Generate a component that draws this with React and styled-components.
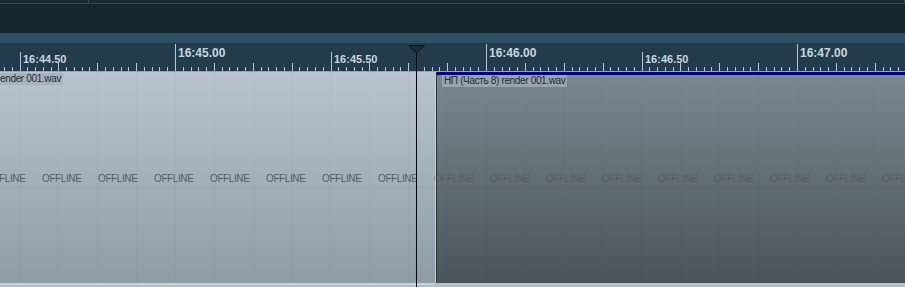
import styled, { createGlobalStyle } from 'styled-components'

const ORIGIN = 175
const PX_PER_SEC = 311
const TICK = PX_PER_SEC / 40

const GlobalStyle = createGlobalStyle`
  html, body { margin: 0; padding: 0; background: #16262e; }
  body { font-family: "Liberation Sans", Arial, sans-serif; overflow: hidden; }
`

const Page = styled.div`
  position: relative;
  width: 905px;
  height: 287px;
  display: flex;
  flex-direction: column;
  overflow: hidden;
`

const TopStrip = styled.div`
  height: 3px;
  display: flex;
  background: #1b2a31;
  border-bottom: 1px solid #34444c;
`

const TopCell = styled.div`
  width: ${p => p.$w || 'auto'};
  flex: ${p => (p.$w ? 'none' : 1)};
  border-right: 1px solid #3b4a52;
`

const DarkArea = styled.div`
  height: 29px;
  background: #16262e;
`

const Band = styled.div`
  height: 10px;
  background: #2c4f62;
`

const Ruler = styled.div`
  position: relative;
  height: 28px;
  background: #223c4d;
  border-bottom: 1px solid #97a4ac;
`

const tickHeights = { minor: 4, medium: 8, half: 19, major: 27 }

const Tick = styled.div`
  position: absolute;
  bottom: 0;
  width: 1px;
  height: ${p => tickHeights[p.$kind]}px;
  background: #b8c5cd;
`

const TickLabel = styled.span`
  position: absolute;
  top: ${p => (p.$major ? 4 : 11)}px;
  font-weight: bold;
  font-size: ${p => (p.$major ? 12 : 11)}px;
  line-height: 1;
  color: #c9d5dd;
  white-space: nowrap;
`

const Tracks = styled.div`
  flex: 1;
  display: flex;
  background: #b3bec4;
`

const Clip = styled.div`
  position: relative;
  height: 211px;
  overflow: hidden;
  display: flex;
  flex-direction: column;
  width: ${p => (p.$w ? p.$w + 'px' : 'auto')};
  flex: ${p => (p.$w ? 'none' : 1)};
  border-bottom: 2px solid ${p => (p.$dark ? '#b9c4ca' : '#c9d3d9')};
  background-image:
    linear-gradient(to bottom, transparent 114px, rgba(0,0,0,0.03) 114px, rgba(0,0,0,0.03) 117px, transparent 117px),
    linear-gradient(to right, rgba(0,0,0,0.028) 1px, transparent 1px),
    linear-gradient(to bottom, ${p => (p.$dark ? '#7c8891, #4a5358' : '#b8c5ce, #8d9ca6')});
  background-size: 100% 100%, ${TICK * 5}px 100%, 100% 100%;
  background-position: 0 0, ${p => p.$grid}px 0, 0 0;
`

const ClipEdge = styled.div`
  width: 1px;
  flex: none;
  height: 211px;
  background: #c3cfd6;
  border-right: 1px solid #2b3338;
`

const BlueBar = styled.div`
  height: 3px;
  background: #0000a6;
`

const ClipLabel = styled.div`
  align-self: flex-start;
  margin-left: ${p => p.$indent}px;
  margin-top: ${p => (p.$bar ? 0 : 1)}px;
  padding: 1px 2px 1px ${p => (p.$indent ? 2 : 0)}px;
  font-size: 10px;
  letter-spacing: -0.35px;
  line-height: 10px;
  color: #1f2b33;
  background: ${p => (p.$dark ? '#98a4ac' : '#a6b4be')};
  white-space: nowrap;
`

const OfflineRow = styled.div`
  position: absolute;
  top: 101px;
  left: ${p => p.$offset}px;
  display: flex;
  gap: 16px;
`

const Offline = styled.span`
  width: 40px;
  font-size: 10px;
  letter-spacing: -0.4px;
  color: ${p => (p.$dark ? 'rgba(90, 84, 86, 0.75)' : '#525b63')};
  white-space: nowrap;
`

const Playhead = styled.div`
  position: absolute;
  left: 408px;
  top: 45px;
  width: 17px;
  height: 242px;
  display: flex;
  flex-direction: column;
  align-items: center;
`

const PlayLine = styled.div`
  flex: 1;
  width: 1px;
  background: #05080a;
`

const ticks = []
for (let i = -23; i <= 94; i++) {
  const x = Math.round(ORIGIN + i * TICK)
  if (x < 0 || x > 905) continue
  let kind = 'minor'
  if (i % 40 === 0) kind = 'major'
  else if (i % 20 === 0) kind = 'half'
  else if (i % 5 === 0) kind = 'medium'
  ticks.push({ i, x, kind })
}

const label = i => {
  const total = 45 * 100 + (i / 40) * 100
  const sec = Math.floor(total / 100)
  const frac = Math.round(total - sec * 100)
  return `16:${sec}.${String(frac).padStart(2, '0')}`
}

const offlineRow = (count, dark) =>
  Array.from({ length: count }, (_, k) => (
    <Offline key={k} $dark={dark}>OFFLINE</Offline>
  ))

const App = () => (
  <Page>
    <GlobalStyle />
    <TopStrip>
      <TopCell $w="88px" />
      <TopCell />
    </TopStrip>
    <DarkArea />
    <Band />
    <Ruler>
      {ticks.map(t => (
        <Tick key={t.i} $kind={t.kind} style={{ left: t.x }} />
      ))}
      {ticks
        .filter(t => t.kind === 'major' || t.kind === 'half')
        .map(t => (
          <TickLabel key={'l' + t.i} $major={t.kind === 'major'} style={{ left: t.x + 3 }}>
            {label(t.i)}
          </TickLabel>
        ))}
    </Ruler>
    <Tracks>
      <Clip $w={435} $grid={19.3}>
        <ClipLabel $indent={0}>ender 001.wav</ClipLabel>
        <OfflineRow $offset={-14}>{offlineRow(9)}</OfflineRow>
      </Clip>
      <ClipEdge />
      <Clip $dark $grid={9.9}>
        <BlueBar />
        <ClipLabel $dark $bar $indent={5}>НП (Часть 8) render 001.wav</ClipLabel>
        <OfflineRow $offset={-3}>{offlineRow(9, true)}</OfflineRow>
      </Clip>
    </Tracks>
    <Playhead>
      <svg width="17" height="8" viewBox="0 0 17 8">
        <path d="M0.5 0.5 H16.5 L8.5 7.8 Z" fill="#1d2c37" stroke="#0b141a" strokeWidth="1" />
      </svg>
      <PlayLine />
    </Playhead>
  </Page>
)

export default App
